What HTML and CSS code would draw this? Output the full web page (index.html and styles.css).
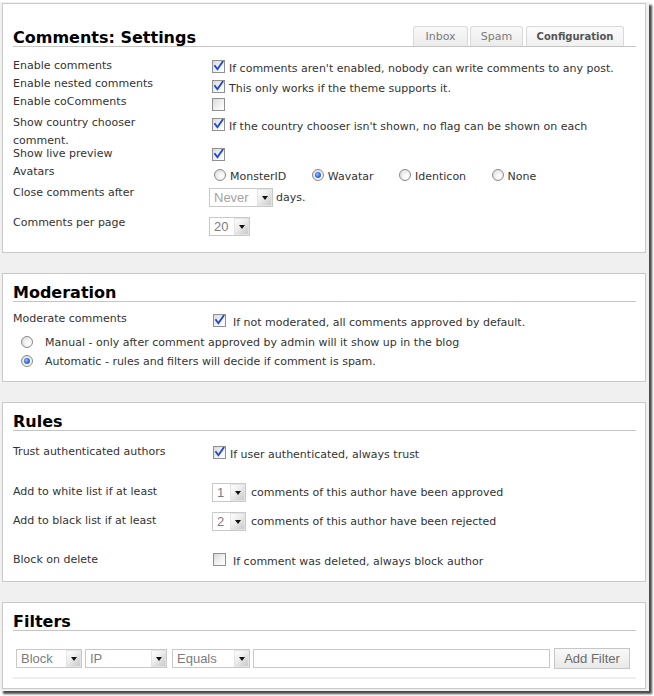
FILE: index.html
```html
<!DOCTYPE html>
<html>
<head>
<meta charset="utf-8">
<title>Comments: Settings</title>
<link rel="stylesheet" href="styles.css">
</head>
<body>
<div class="frame">

  <section class="panel p-settings">
    <div class="head">
      <h2 class="title">Comments: Settings</h2>
      <ul class="tabs">
        <li class="tab t-inbox">Inbox</li>
        <li class="tab t-spam">Spam</li>
        <li class="tab t-config active">Configuration</li>
      </ul>
    </div>

    <div class="row s1">
      <div class="lbl">Enable comments</div>
      <div class="ctl"><span class="cb on"><svg viewBox="0 0 11 11" width="11" height="11"><path d="M2 5 L4.4 8.2 L9.6 0.8"/></svg></span>If comments aren't enabled, nobody can write comments to any post.</div>
    </div>
    <div class="row s2">
      <div class="lbl">Enable nested comments</div>
      <div class="ctl"><span class="cb on"><svg viewBox="0 0 11 11" width="11" height="11"><path d="M2 5 L4.4 8.2 L9.6 0.8"/></svg></span>This only works if the theme supports it.</div>
    </div>
    <div class="row s3">
      <div class="lbl">Enable coComments</div>
      <div class="ctl"><span class="cb"></span></div>
    </div>
    <div class="row s4">
      <div class="lbl two">Show country chooser<br>comment.</div>
      <div class="ctl"><span class="cb on"><svg viewBox="0 0 11 11" width="11" height="11"><path d="M2 5 L4.4 8.2 L9.6 0.8"/></svg></span>If the country chooser isn't shown, no flag can be shown on each</div>
    </div>
    <div class="row s5">
      <div class="lbl">Show live preview</div>
      <div class="ctl"><span class="cb on"><svg viewBox="0 0 11 11" width="11" height="11"><path d="M2 5 L4.4 8.2 L9.6 0.8"/></svg></span></div>
    </div>
    <div class="row s6">
      <div class="lbl">Avatars</div>
      <div class="ctl avatars">
        <span class="av"><span class="rd"></span>MonsterID</span>
        <span class="av"><span class="rd on"></span>Wavatar</span>
        <span class="av"><span class="rd"></span>Identicon</span>
        <span class="av"><span class="rd"></span>None</span>
      </div>
    </div>
    <div class="row s7">
      <div class="lbl">Close comments after</div>
      <div class="ctl sel-ctl"><span class="sel w-never dim"><span class="val">Never</span><span class="arr"></span></span><span class="after tight">days.</span></div>
    </div>
    <div class="row s8">
      <div class="lbl">Comments per page</div>
      <div class="ctl sel-ctl"><span class="sel w-20"><span class="val">20</span><span class="arr"></span></span></div>
    </div>
  </section>

  <section class="panel p-moderation">
    <div class="head">
      <h2 class="title">Moderation</h2>
    </div>
    <div class="row m1">
      <div class="lbl">Moderate comments</div>
      <div class="ctl wide"><span class="cb on"><svg viewBox="0 0 11 11" width="11" height="11"><path d="M2 5 L4.4 8.2 L9.6 0.8"/></svg></span>If not moderated, all comments approved by default.</div>
    </div>
    <div class="opt"><span class="rd"></span>Manual - only after comment approved by admin will it show up in the blog</div>
    <div class="opt last"><span class="rd on"></span>Automatic - rules and filters will decide if comment is spam.</div>
  </section>

  <section class="panel p-rules">
    <div class="head">
      <h2 class="title">Rules</h2>
    </div>
    <div class="row u1">
      <div class="lbl">Trust authenticated authors</div>
      <div class="ctl rule"><span class="cb on"><svg viewBox="0 0 11 11" width="11" height="11"><path d="M2 5 L4.4 8.2 L9.6 0.8"/></svg></span>If user authenticated, always trust</div>
    </div>
    <div class="row u2">
      <div class="lbl">Add to white list if at least</div>
      <div class="ctl sel-ctl"><span class="sel w-1"><span class="val">1</span><span class="arr"></span></span><span class="after">comments of this author have been approved</span></div>
    </div>
    <div class="row u3">
      <div class="lbl">Add to black list if at least</div>
      <div class="ctl sel-ctl"><span class="sel w-1"><span class="val">2</span><span class="arr"></span></span><span class="after">comments of this author have been rejected</span></div>
    </div>
    <div class="row u4">
      <div class="lbl">Block on delete</div>
      <div class="ctl wide"><span class="cb"></span>If comment was deleted, always block author</div>
    </div>
  </section>

  <section class="panel p-filters">
    <div class="head">
      <h2 class="title">Filters</h2>
    </div>
    <div class="filter-bar">
      <span class="sel w-block"><span class="val">Block</span><span class="arr"></span></span>
      <span class="sel w-ip"><span class="val">IP</span><span class="arr"></span></span>
      <span class="sel w-equals"><span class="val">Equals</span><span class="arr"></span></span>
      <input class="inp" type="text" value="">
      <button class="btn" type="button">Add Filter</button>
    </div>
    <div class="filter-rule"></div>
  </section>

</div>
</body>
</html>
```

FILE: styles.css
```css
* { box-sizing: border-box; }

html, body {
  margin: 0;
  padding: 0;
  background: #ffffff;
}

body {
  width: 654px;
  height: 696px;
  overflow: hidden;
  font-family: "DejaVu Sans", Verdana, sans-serif;
  font-size: 11px;
  color: #333333;
}

/* outer window with drop shadow */
.frame {
  margin-top: 2px;
  width: 649px;
  padding: 1px 3px 2px 2px;
  background: #f0f0f0;
  box-shadow: 3px 3px 2px #4a4a4a;
  display: flex;
  flex-direction: column;
  gap: 20px;
}

.panel {
  background: #ffffff;
  border: 1px solid #c9c9c9;
  padding: 7px 9px 0 10px;
}

.p-settings { padding-top: 22px; padding-bottom: 20px; }
.p-moderation { padding-bottom: 10px; }
.p-rules { padding-bottom: 12px; }
.p-filters { padding-bottom: 9px; }

/* section heading with underline */
.head {
  display: flex;
  align-items: flex-end;
  justify-content: space-between;
  height: 21px;
  border-bottom: 1px solid #c4c4c4;
}

.title {
  margin: 0;
  font-size: 16px;
  line-height: 17px;
  font-weight: bold;
  color: #000000;
}

/* tabs */
.tabs {
  list-style: none;
  margin: 0 12px 0 0;
  padding: 0;
  display: flex;
}

.tab {
  height: 20px;
  line-height: 19px;
  text-align: center;
  border: 1px solid #d9d9d9;
  border-bottom: 0;
  border-radius: 3px 3px 0 0;
  background: linear-gradient(#f8f8f8, #ececec);
  color: #7a7a7a;
}

.t-inbox { width: 55px; margin-right: 2px; }
.t-spam { width: 53px; margin-right: 3px; }
.t-config {
  width: 98px;
  font-size: 10px;
  font-weight: bold;
  color: #555555;
  background: linear-gradient(#fbfbfb, #f1f1f1);
}

/* form rows */
.row {
  display: flex;
  align-items: flex-start;
  line-height: 18px;
}

.lbl {
  width: 199px;
  flex: none;
}

.lbl.two {
  line-height: 18px;
  padding-top: 1px;
}

.ctl {
  white-space: nowrap;
  line-height: 18px;
}

.sel-ctl {
  display: flex;
  align-items: center;
}

.s1 { margin-top: 10px; height: 18px; }
.s1 .ctl { margin-top: 3px; }
.s2 { height: 18px; }
.s2 .ctl { margin-top: 5px; }
.s3 { height: 20px; }
.s3 .ctl { margin-top: 5px; }
.s4 { height: 32px; }
.s4 .ctl { margin-top: 5px; }
.s5 { height: 18px; }
.s5 .ctl { margin-top: 3px; }
.s6 { height: 21px; }
.s6 .ctl { margin-top: 5px; }
.s7 { height: 30px; }
.s7 .ctl { margin-top: 4px; margin-left: -3px; }
.s8 { height: 18px; }
.s8 .ctl { margin-top: 3px; margin-left: -3px; }

/* checkbox */
.cb {
  display: inline-block;
  width: 13px;
  height: 13px;
  border: 1px solid #8f9090;
  background: linear-gradient(135deg, #d9d9d9 0%, #f4f4f4 60%, #ffffff 100%);
  vertical-align: -1px;
  margin-right: 4px;
}

.cb svg {
  display: block;
}

.cb path {
  fill: none;
  stroke: #2148d2;
  stroke-width: 1.9;
  stroke-linecap: square;
}

.wide .cb { margin-left: 1px; margin-right: 7px; }
.rule .cb { margin-left: 1px; }

/* radio */
.rd {
  display: inline-block;
  width: 12px;
  height: 12px;
  border: 1px solid #8a8a8a;
  border-radius: 50%;
  background: radial-gradient(circle at 65% 65%, #ffffff 0%, #f2f2f2 40%, #d4d4d4 100%);
  vertical-align: -1px;
  position: relative;
}

.rd.on::after {
  content: "";
  position: absolute;
  left: 2px;
  top: 2px;
  width: 6px;
  height: 6px;
  border-radius: 50%;
  background: radial-gradient(circle at 40% 40%, #9cc4ff 0%, #3a74e6 45%, #1443c4 100%);
}

.avatars { padding-left: 2px; }

.av { margin-right: 22px; }
.av .rd { margin-right: 4px; }

/* moderation options */
.m1 { margin-top: 8px; height: 24px; }
.m1 .ctl { margin-top: 4px; }

.opt {
  height: 19px;
  line-height: 18px;
  padding-left: 8px;
  white-space: nowrap;
}

.opt.last { height: 18px; }

.opt .rd {
  margin-right: 12px;
  vertical-align: -2px;
}

/* rules */
.u1 { margin-top: 12px; height: 40px; }
.u1 .ctl { margin-top: 3px; }
.u2 { height: 29px; }
.u3 { height: 39px; }
.u4 { height: 18px; }
.u4 .ctl { margin-top: 2px; }

/* select look-alike */
.sel {
  display: inline-flex;
  align-items: center;
  justify-content: space-between;
  height: 19px;
  flex: none;
  border: 1px solid #c9c9c9;
  background: #ffffff;
  font-family: "Liberation Sans", Arial, sans-serif;
  font-size: 13px;
  line-height: 17px;
  color: #7c7c7c;
}

.sel.dim { color: #a3a3a3; }

.val { padding-left: 4px; }

.arr {
  width: 15px;
  height: 17px;
  border: 1px solid #e4e4e4;
  background: linear-gradient(135deg, #ffffff 0%, #ececec 45%, #c9c9c9 100%);
  display: flex;
  align-items: center;
  justify-content: center;
}

.arr::after {
  content: "";
  width: 0;
  height: 0;
  border-top: 4px solid #111111;
  border-left: 3px solid transparent;
  border-right: 3px solid transparent;
}

.w-never { width: 64px; }
.w-20 { width: 41px; }
.w-1 { width: 34px; }
.w-block { width: 66px; }
.w-ip { width: 82px; }
.w-equals { width: 78px; }

.after { margin-left: 5px; }
.after.tight { margin-left: 3px; }

/* filters */
.filter-bar {
  margin-top: 17px;
  height: 21px;
  display: flex;
  align-items: center;
  padding-left: 3px;
}

.w-block { margin-right: 3px; }
.w-ip { margin-right: 5px; }
.w-equals { margin-right: 3px; }

.inp {
  width: 297px;
  height: 19px;
  margin: 0 4px 0 0;
  padding: 0 3px;
  border: 1px solid #c9c9c9;
  background: #ffffff;
  font-family: "Liberation Sans", Arial, sans-serif;
  font-size: 13px;
}

.btn {
  width: 76px;
  height: 21px;
  margin: 0;
  padding: 0;
  border: 1px solid #c6c6c6;
  background: linear-gradient(#f9f9f9, #e9e9e9);
  color: #6b6b6b;
  font-family: "Liberation Sans", Arial, sans-serif;
  font-size: 13px;
}

.filter-rule {
  margin-top: 8px;
  border-top: 2px solid #eeeeee;
}
```
